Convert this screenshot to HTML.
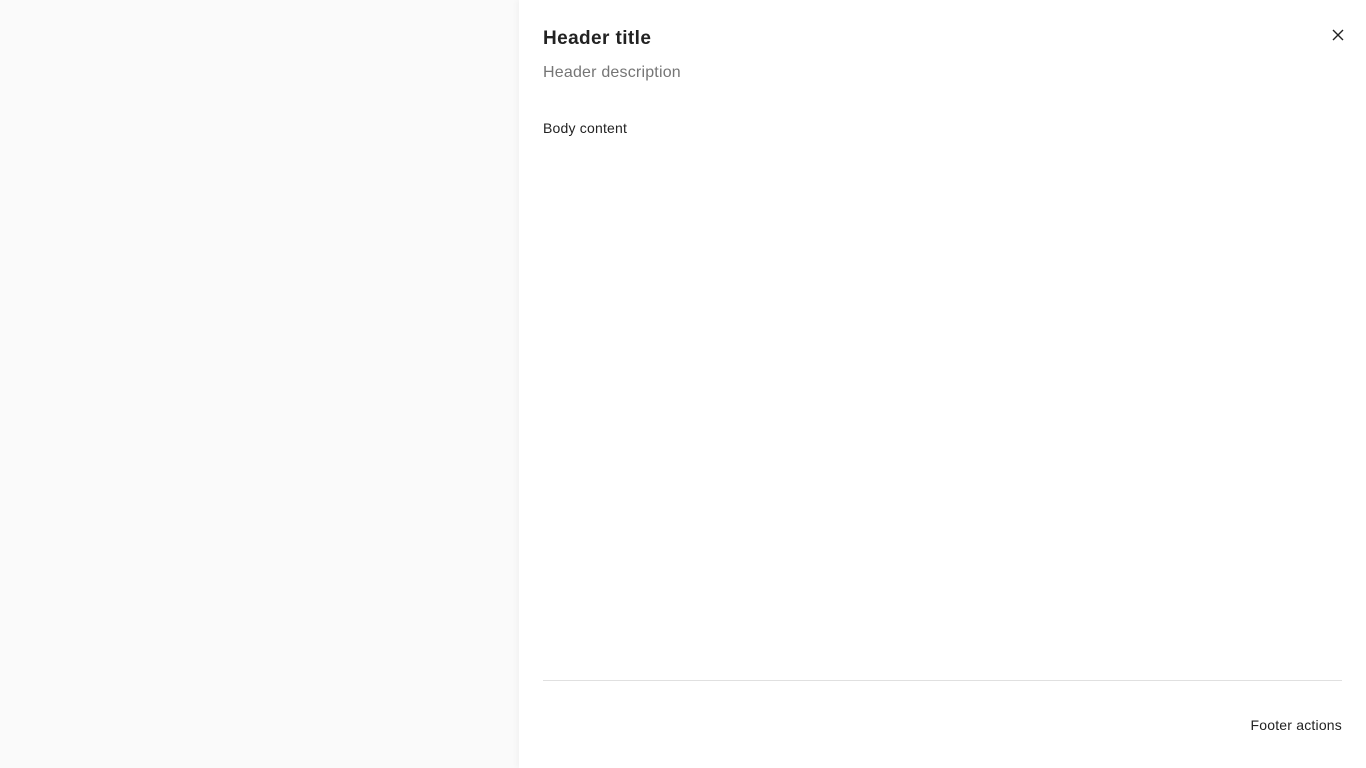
<!DOCTYPE html>
<html><head><meta charset="utf-8"><style>
html,body{margin:0;padding:0;width:1366px;height:768px;overflow:hidden;background:#fafafa;font-family:"Liberation Sans",sans-serif}
.panel{position:absolute;left:519px;top:0;width:847px;height:768px;background:#fff;box-shadow:-2px 0 6px rgba(0,0,0,0.04)}
.t{position:absolute;left:24px;top:28px;font-size:19px;font-weight:bold;color:#222;letter-spacing:0.4px}
.d{position:absolute;left:24px;top:64px;font-size:16px;color:#757575;letter-spacing:0.2px}
.b{position:absolute;left:24px;top:120px;font-size:14px;color:#222;letter-spacing:0.2px}
.x{position:absolute;left:813px;top:29px}
.line{position:absolute;left:24px;top:680px;width:799px;height:1px;background:#e0e0e0}
.f{position:absolute;right:24px;top:717px;font-size:14px;color:#222;letter-spacing:0.2px}
</style></head><body>
<div class="panel">
<div class="t">Header title</div>
<div class="d">Header description</div>
<div class="b">Body content</div>
<svg class="x" width="12" height="12" viewBox="0 0 12 12"><path d="M1 1L11 11M11 1L1 11" stroke="#222" stroke-width="1.4"/></svg>
<div class="line"></div>
<div class="f">Footer actions</div>
</div>
</body></html>
